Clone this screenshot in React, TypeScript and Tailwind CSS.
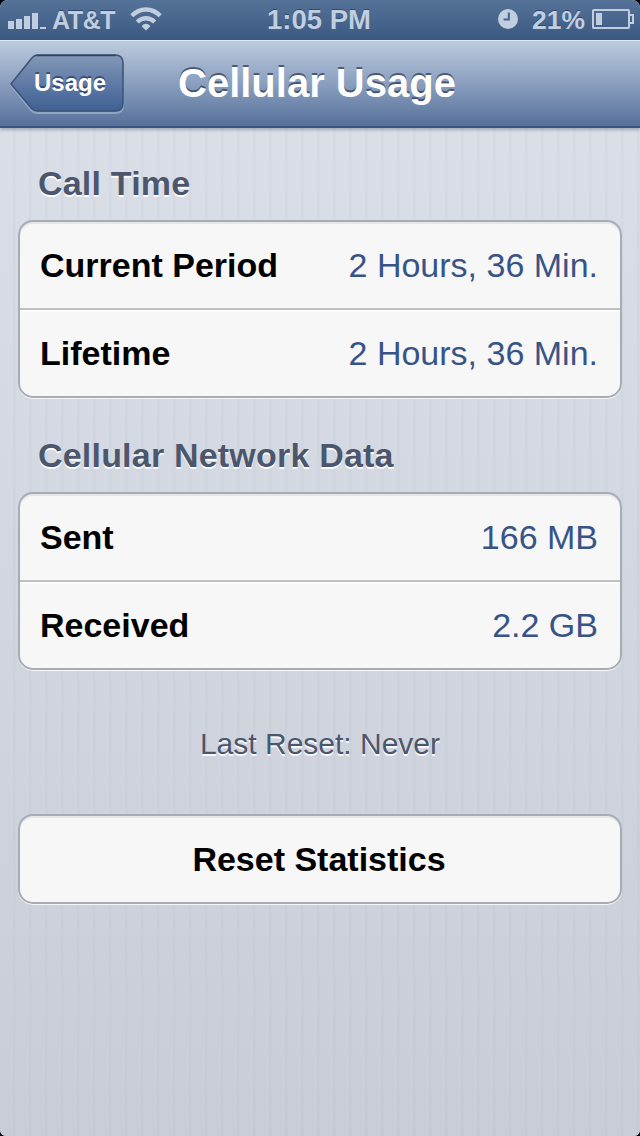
import React from 'react';

interface Row {
  label: string;
  value: string;
}

const callTime: Row[] = [
  { label: 'Current Period', value: '2 Hours, 36 Min.' },
  { label: 'Lifetime', value: '2 Hours, 36 Min.' },
];

const networkData: Row[] = [
  { label: 'Sent', value: '166 MB' },
  { label: 'Received', value: '2.2 GB' },
];

const SignalIcon: React.FC = () => (
  <svg width="38" height="22" viewBox="0 0 38 22" fill="currentColor">
    <rect x="0" y="12" width="6" height="8" />
    <rect x="8" y="10" width="6" height="10" />
    <rect x="16" y="7" width="6" height="13" />
    <rect x="24" y="4" width="6" height="16" />
    <rect x="32" y="18" width="6" height="2" />
  </svg>
);

const WifiIcon: React.FC = () => (
  <svg width="32" height="24" viewBox="0 0 32 24" fill="none" stroke="currentColor" strokeWidth="4.4">
    <path d="M1.8 8.8C9.8 0.4 22.2 0.4 30.2 8.8" />
    <path d="M7.3 15C12.2 9.9 19.8 9.9 24.7 15" />
    <path d="M16 23.6L11.8 19.6C12.6 15.8 19.4 15.8 20.2 19.6Z" fill="currentColor" stroke="none" />
  </svg>
);

const ClockIcon: React.FC = () => (
  <svg width="20" height="20" viewBox="0 0 20 20">
    <circle cx="10" cy="10" r="10" fill="currentColor" />
    <path d="M10.8 3.6V10.6H5.6" fill="none" stroke="#45628a" strokeWidth="2" />
  </svg>
);

const BatteryIcon: React.FC = () => (
  <svg width="42" height="20" viewBox="0 0 42 20" fill="none" stroke="currentColor" strokeWidth="2">
    <rect x="1" y="1" width="36" height="18" rx="0.8" />
    <path d="M38 6H41V14H38" />
    <rect x="4" y="4" width="6" height="12" fill="currentColor" stroke="none" />
  </svg>
);

const StatusBar: React.FC = () => (
  <div className="h-10 grid grid-cols-[1fr_auto_1fr] items-center pl-2 pr-1.5 pb-0.5 bg-linear-to-b from-[#557299] to-[#3c5a81] text-[#c0cee0] font-bold leading-none whitespace-nowrap [text-shadow:0_-1px_0_rgba(30,50,80,0.6)]">
    <div className="flex items-center pt-0.5">
      <SignalIcon />
      <span className="ml-1.5 mt-px w-[63px] text-[25px] tracking-[-0.4px]">AT&amp;T</span>
      <span className="ml-[15px] mb-0.5"><WifiIcon /></span>
    </div>
    <span className="-ml-0.5 mr-0.5 text-[27.5px] pt-px">1:05 PM</span>
    <div className="flex items-center justify-end">
      <ClockIcon />
      <span className="ml-[14px] mr-[7px] mt-0.5 text-[26.5px]">21%</span>
      <BatteryIcon />
    </div>
  </div>
);

const NavBar: React.FC = () => (
  <div className="relative z-10 h-[88px] grid grid-cols-[168px_1fr] items-center border-t border-[#dfe7f0] border-b-2 border-b-[#375680] bg-linear-to-b from-[#bccbdd] via-[#8a9fbf] to-[#56719a] shadow-[0_2px_3px_rgba(60,70,90,0.35)] text-white font-bold">
    <button type="button" className="relative ml-2.5 w-[114px] h-[60px] mt-px pl-6 pr-[17px] pb-0.5 text-[24px] leading-[56px] text-left [text-shadow:0_-2px_0_rgba(40,60,95,0.75)]">
      <svg className="absolute left-0 top-0" width="116" height="62" viewBox="0 0 116 62">
        <defs>
          <linearGradient id="backFill" x1="0" y1="0" x2="0" y2="1">
            <stop offset="0" stopColor="#8498b7" />
            <stop offset="0.5" stopColor="#5f7ba6" />
            <stop offset="1" stopColor="#3f6093" />
          </linearGradient>
        </defs>
        <path d="M1 31L21 6Q24 3 28 3H105Q113 3 113 11V51Q113 59 105 59H28Q24 59 21 56Z" fill="none" stroke="#b5c4d9" strokeOpacity="0.55" strokeWidth="2" />
        <path d="M1 30L21 5Q24 1 28 1H105Q113 1 113 9V49Q113 57 105 57H28Q24 57 21 54Z" fill="url(#backFill)" stroke="#3d5378" strokeWidth="1.6" />
        <path d="M26 1.5H106" stroke="#2f4363" strokeWidth="1.6" />
      </svg>
      <span className="relative">Usage</span>
    </button>
    <h1 className="ml-[10px] mb-0.5 text-[40px] leading-none [text-shadow:0_-2px_0_rgba(50,62,85,0.75)]">Cellular Usage</h1>
  </div>
);

const SectionTitle: React.FC<{ children: React.ReactNode }> = ({ children }) => (
  <h2 className="ml-5 text-[34px] leading-[40px] tracking-[0.2px] font-bold text-[#4c566c] [text-shadow:0_2px_0_rgba(255,255,255,0.9)]">{children}</h2>
);

const Group: React.FC<{ rows: Row[] }> = ({ rows }) => (
  <div className="mt-[17px] h-[178px] rounded-[15px] border-2 border-[#a7abb5] bg-[#f7f7f7] shadow-[0_1px_0_rgba(255,255,255,0.8),inset_0_2px_1px_rgba(0,0,0,0.07)] text-[34px]">
    {rows.map((row, i) => (
      <div
        key={row.label}
        className={`flex items-center justify-between pl-5 pr-[22px] ${i > 0 ? 'h-[88px] border-t-2 border-[#bfc0c3] shadow-[inset_0_2px_0_#fff]' : 'h-[86px]'}`}
      >
        <span className="font-bold text-black">{row.label}</span>
        <span className="text-[#385487]">{row.value}</span>
      </div>
    ))}
  </div>
);

const App: React.FC = () => {
  return (
    <div className="w-[640px] h-[1136px] bg-black font-['Liberation_Sans',Arial,sans-serif]">
      <div className="h-full flex flex-col overflow-hidden rounded-t-[8px] rounded-b-[6px] bg-[#d0d5df]">
        <StatusBar />
        <NavBar />
        <main className="flex-1 px-[18px] pt-[35px] bg-[repeating-linear-gradient(90deg,rgba(90,100,125,0)_0px,rgba(90,100,125,0)_12px,rgba(90,100,125,0.035)_14px,rgba(90,100,125,0.035)_15px,rgba(90,100,125,0)_16px),linear-gradient(180deg,#d9dee7_0%,#c8cdd7_100%)]">
          <SectionTitle>Call Time</SectionTitle>
          <Group rows={callTime} />
          <div className="h-[37px]" />
          <SectionTitle>Cellular Network Data</SectionTitle>
          <Group rows={networkData} />
          <p className="mt-[54px] text-center text-[30px] leading-[40px] text-[#4c566c] [text-shadow:0_2px_0_rgba(255,255,255,0.9)]">Last Reset: Never</p>
          <button
            type="button"
            className="mt-[50px] w-full h-[90px] rounded-[15px] border-2 border-[#a7abb5] bg-[#f7f7f7] shadow-[0_1px_0_rgba(255,255,255,0.8),inset_0_2px_1px_rgba(0,0,0,0.07)] pr-0.5 text-[34px] font-bold text-black"
          >
            Reset Statistics
          </button>
        </main>
      </div>
    </div>
  );
};

export default App;
